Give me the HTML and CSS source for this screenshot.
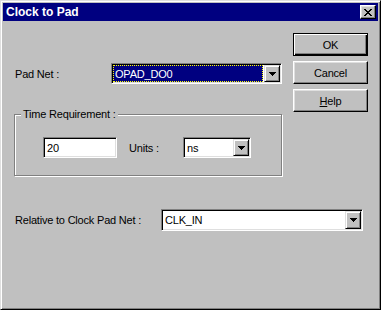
FILE: index.html
```html
<!DOCTYPE html>
<html lang="en">
<head>
  <meta charset="UTF-8">
  <title>Clock to Pad</title>
  <link rel="stylesheet" href="styles.css">
</head>
<body>
  <div class="window">
    <div class="titlebar">
      <span class="title">Clock to Pad</span>
      <button class="close">
        <svg width="8" height="7" viewBox="0 0 8 7" shape-rendering="crispEdges"><path d="M0 0h2v1H0zM6 0h2v1H6zM1 1h2v1H1zM5 1h2v1H5zM2 2h4v1H2zM3 3h2v1H3zM2 4h4v1H2zM1 5h2v1H1zM5 5h2v1H5zM0 6h2v1H0zM6 6h2v1H6z" fill="#000"/></svg>
      </button>
    </div>

    <div class="content">
      <div class="top">
        <div class="left">
          <div class="row pad-row">
            <span class="label pad-label">Pad Net :</span>
            <div class="combo combo-pad">
              <span class="combo-text selected">OPAD_DO0</span>
              <span class="combo-btn"><svg width="7" height="4" viewBox="0 0 7 4" shape-rendering="crispEdges"><path d="M0 0h7v1H0zM1 1h5v1H1zM2 2h3v1H2zM3 3h1v1H3z" fill="#000"/></svg></span>
            </div>
          </div>

          <div class="group">
            <div class="group-title">Time Requirement :</div>
            <div class="group-body">
              <div class="field">20</div>
              <span class="label units-label">Units :</span>
              <div class="combo combo-units">
                <span class="combo-text">ns</span>
                <span class="combo-btn"><svg width="7" height="4" viewBox="0 0 7 4" shape-rendering="crispEdges"><path d="M0 0h7v1H0zM1 1h5v1H1zM2 2h3v1H2zM3 3h1v1H3z" fill="#000"/></svg></span>
              </div>
            </div>
          </div>
        </div>

        <div class="buttons">
          <button class="btn default">OK</button>
          <button class="btn">Cancel</button>
          <button class="btn"><u>H</u>elp</button>
        </div>
      </div>

      <div class="row rel-row">
        <span class="label rel-label">Relative to Clock Pad Net :</span>
        <div class="combo combo-rel">
          <span class="combo-text">CLK_IN</span>
          <span class="combo-btn"><svg width="7" height="4" viewBox="0 0 7 4" shape-rendering="crispEdges"><path d="M0 0h7v1H0zM1 1h5v1H1zM2 2h3v1H2zM3 3h1v1H3z" fill="#000"/></svg></span>
        </div>
      </div>
    </div>
  </div>
</body>
</html>
```

FILE: styles.css
```css
* {
  box-sizing: border-box;
}
body {
  margin: 0;
  font-family: "Liberation Sans", Arial, sans-serif;
  font-size: 11px;
  letter-spacing: -0.2px;
  color: #000;
}
.window {
  width: 381px;
  height: 310px;
  background: #c0c0c0;
  border: 1px solid;
  border-color: #dfdfdf #000 #000 #dfdfdf;
  box-shadow: inset 1px 1px #fff, inset -1px -1px #808080;
  padding: 2px;
}
.titlebar {
  height: 18px;
  background: #000080;
  color: #fff;
  display: flex;
  align-items: center;
  justify-content: space-between;
  padding: 0 2px 0 3px;
}
.title {
  font-weight: bold;
  font-size: 12px;
  letter-spacing: 0;
}
.close {
  width: 16px;
  height: 14px;
  padding: 0;
  background: #c0c0c0;
  border: 1px solid;
  border-color: #fff #000 #000 #fff;
  box-shadow: inset -1px -1px #808080, inset 1px 1px #dfdfdf;
  display: flex;
  align-items: center;
  justify-content: center;
}
.content {
  padding: 12px 0 0 11px;
}
.top {
  display: flex;
}
.left {
  width: 269px;
}
.row {
  display: flex;
  align-items: center;
}
.label {
  padding-left: 1px;
  white-space: nowrap;
}
.pad-row {
  margin-top: 30px;
}
.pad-label {
  width: 97px;
}
.combo {
  display: flex;
  height: 21px;
  background: #fff;
  border: 1px solid;
  border-color: #808080 #fff #fff #808080;
  box-shadow: inset 1px 1px #000, inset -1px -1px #dfdfdf;
  padding: 1px;
}
.combo-text {
  flex: 1;
  display: flex;
  align-items: center;
  padding-left: 2px;
}
.combo-text.selected {
  background: #000080;
  color: #fff;
  outline: 1px dotted #ff0;
  outline-offset: -1px;
  margin-right: 1px;
}
.combo-btn {
  width: 16px;
  background: #c0c0c0;
  border: 1px solid;
  border-color: #dfdfdf #000 #000 #dfdfdf;
  box-shadow: inset 1px 1px #fff, inset -1px -1px #808080;
  display: flex;
  align-items: center;
  justify-content: center;
}
.combo-pad {
  width: 171px;
}
.group {
  margin-top: 30px;
  width: 268px;
  height: 62px;
  border: 1px solid #808080;
  box-shadow: inset 1px 1px #fff, 1px 1px #fff;
}
.group-title {
  width: fit-content;
  margin: -7px 0 0 6px;
  padding: 0 2px;
  line-height: 13px;
  background: #c0c0c0;
}
.group-body {
  display: flex;
  align-items: center;
  margin-top: 16px;
  padding-left: 28px;
}
.field {
  width: 74px;
  height: 21px;
  background: #fff;
  border: 1px solid;
  border-color: #808080 #fff #fff #808080;
  box-shadow: inset 1px 1px #000, inset -1px -1px #dfdfdf;
  padding-left: 3px;
  display: flex;
  align-items: center;
}
.units-label {
  width: 55px;
  margin-left: 11px;
}
.combo-units {
  width: 68px;
}
.buttons {
  margin-left: 10px;
  display: flex;
  flex-direction: column;
  gap: 5px;
}
.btn {
  width: 75px;
  height: 23px;
  padding: 0;
  font: inherit;
  letter-spacing: inherit;
  color: #000;
  background: #c0c0c0;
  border: 1px solid;
  border-color: #fff #000 #000 #fff;
  box-shadow: inset -1px -1px #808080, inset 1px 1px #dfdfdf;
}
.btn.default {
  border-color: #000;
  box-shadow: inset 1px 1px #fff, inset -1px -1px #000, inset -2px -2px #808080;
}
.rel-row {
  margin-top: 33px;
}
.rel-label {
  width: 147px;
}
.combo-rel {
  width: 202px;
  height: 22px;
}
```
